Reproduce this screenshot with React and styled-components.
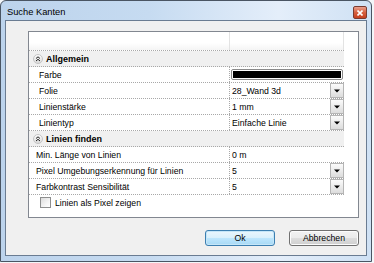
import React from "react";
import styled, { createGlobalStyle } from "styled-components";

const Global = createGlobalStyle`
  html, body { margin: 0; padding: 0; background: #f3f6f9; }
  body { font-family: "Liberation Sans", Arial, sans-serif; }
`;

const Window = styled.div`
  box-sizing: border-box;
  width: 372px;
  height: 262px;
  border: 1px solid #4a5563;
  border-radius: 6px 6px 0 0;
  background: linear-gradient(90deg, #bcd3ec 0%, #c6dbf1 40%, #e4eefa 75%, #cfe1f4 100%);
  padding: 0 4px 5px 4px;
  display: flex;
  flex-direction: column;
`;

const TitleBar = styled.div`
  height: 19px;
  display: flex;
  align-items: center;
  justify-content: space-between;
`;

const Title = styled.span`
  font-size: 9.3px;
  color: #000;
  padding-left: 2px;
  padding-top: 2px;
`;

const CloseBtn = styled.div`
  box-sizing: border-box;
  width: 14px;
  height: 13px;
  margin-top: 4px;
  border: 1px solid #7a3b30;
  border-radius: 2px;
  background: linear-gradient(180deg, #e9a08e 0%, #d7603f 50%, #c6401f 100%);
  display: flex;
  align-items: center;
  justify-content: center;
`;

const Client = styled.div`
  flex: 1;
  box-sizing: border-box;
  border: 1px solid #6a7c92;
  background: #f0f0f0;
  padding: 10px 7px 9px 22px;
  display: flex;
  flex-direction: column;
`;

const Panel = styled.div`
  box-sizing: border-box;
  height: 187px;
  border: 1px solid #828790;
  background: #fff;
`;

const Grid = styled.div`
  width: 315px;
  display: flex;
  flex-direction: column;
`;

const HeaderRow = styled.div`
  box-sizing: border-box;
  height: 19px;
  display: grid;
  grid-template-columns: 201px 114px;
  border-bottom: 1px dotted #a8a8a8;
  background: linear-gradient(180deg, #ffffff 0%, #ffffff 60%, #f4f4f4 100%);
`;

const HeaderCell = styled.div`
  border-right: 1px solid #e3e3e3;
`;

const CategoryRow = styled.div`
  box-sizing: border-box;
  height: 16px;
  display: flex;
  align-items: center;
  gap: 3px;
  padding-left: 4px;
  background: #f0f0f0;
  border-bottom: 1px dotted #a8a8a8;
  font-size: 9px;
  font-weight: bold;
  color: #000;
`;

const Row = styled.div`
  box-sizing: border-box;
  height: 16px;
  display: grid;
  grid-template-columns: 201px 114px;
  border-bottom: 1px dotted #a8a8a8;
  font-size: 8.7px;
  color: #000;
`;

const Label = styled.div`
  box-sizing: border-box;
  display: flex;
  align-items: center;
  padding-left: ${(p) => p.$indent}px;
  border-right: 1px dotted #a8a8a8;
  white-space: nowrap;
`;

const Value = styled.div`
  display: flex;
  align-items: center;
  justify-content: space-between;
  padding-left: 2px;
  white-space: nowrap;
`;

const Swatch = styled.div`
  box-sizing: border-box;
  flex: 1;
  height: 11px;
  margin-right: 1px;
  margin-left: -1px;
  border: 1px solid #8a8a8a;
  border-radius: 2px;
  padding: 1px;
  background: #fff;
  &::after {
    content: "";
    display: block;
    height: 100%;
    background: #000;
  }
`;

const DropBtn = styled.div`
  box-sizing: border-box;
  width: 14px;
  height: 15px;
  border: 1px solid #b5b5b5;
  background: linear-gradient(180deg, #fbfbfb 0%, #ececec 50%, #dcdcdc 100%);
  display: flex;
  align-items: center;
  justify-content: center;
`;

const CheckRow = styled.div`
  height: 15px;
  display: flex;
  align-items: center;
  gap: 4px;
  padding-left: 11px;
  font-size: 8.7px;
  color: #000;
`;

const CheckBox = styled.div`
  box-sizing: border-box;
  width: 11px;
  height: 11px;
  border: 1px solid #8e8f8f;
  background: linear-gradient(135deg, #dcdcdc 0%, #f4f4f4 60%, #ffffff 100%);
`;

const ButtonBar = styled.div`
  display: flex;
  justify-content: flex-end;
  gap: 14px;
  margin-top: 12px;
`;

const Button = styled.div`
  box-sizing: border-box;
  width: 70px;
  height: 16px;
  border-radius: 3px;
  display: flex;
  align-items: center;
  justify-content: center;
  font-size: 8.7px;
  color: #000;
  border: 1px solid ${(p) => (p.$primary ? "#3c7fb1" : "#707070")};
  background: ${(p) =>
    p.$primary
      ? "linear-gradient(180deg, #eaf6fd 0%, #d9f0fc 50%, #bee6fd 51%, #a7d9f5 100%)"
      : "linear-gradient(180deg, #f2f2f2 0%, #ebebeb 50%, #dddddd 51%, #cfcfcf 100%)"};
  box-shadow: inset 0 0 0 1px ${(p) => (p.$primary ? "#c5e6f8" : "#fcfcfc")};
`;

const Chevron = () => (
  <svg width="10" height="10" viewBox="0 0 10 10">
    <defs>
      <linearGradient id="cg" x1="0" y1="0" x2="0" y2="1">
        <stop offset="0" stopColor="#ffffff" />
        <stop offset="1" stopColor="#d8d8d8" />
      </linearGradient>
    </defs>
    <circle cx="5" cy="5" r="4.5" fill="url(#cg)" stroke="#c4c4c4" strokeWidth="1" />
    <path d="M3 4.5 L5 2.8 L7 4.5 M3 7 L5 5.3 L7 7" fill="none" stroke="#222" strokeWidth="1" />
  </svg>
);

const Arrow = () => (
  <svg width="6" height="4" viewBox="0 0 6 4">
    <path d="M0 0.5 H6 L3 3.5 Z" fill="#000" />
  </svg>
);

const CloseX = () => (
  <svg width="6" height="6" viewBox="0 0 6 6">
    <path d="M0.5 0.5 L5.5 5.5 M5.5 0.5 L0.5 5.5" stroke="#fff" strokeWidth="1.6" />
  </svg>
);

const groups = [
  {
    title: "Allgemein",
    indent: 10,
    rows: [
      { label: "Farbe", swatch: true },
      { label: "Folie", value: "28_Wand 3d", drop: true },
      { label: "Linienstärke", value: "1 mm", drop: true },
      { label: "Linientyp", value: "Einfache Linie", drop: true },
    ],
  },
  {
    title: "Linien finden",
    indent: 7,
    rows: [
      { label: "Min. Länge von Linien", value: "0 m" },
      { label: "Pixel Umgebungserkennung für Linien", value: "5", drop: true },
      { label: "Farbkontrast Sensibilität", value: "5", drop: true },
    ],
  },
];

export default function App() {
  return (
    <>
      <Global />
      <Window>
        <TitleBar>
          <Title>Suche Kanten</Title>
          <CloseBtn>
            <CloseX />
          </CloseBtn>
        </TitleBar>
        <Client>
          <Panel>
            <Grid>
              <HeaderRow>
                <HeaderCell />
                <HeaderCell />
              </HeaderRow>
              {groups.map((g) => (
                <React.Fragment key={g.title}>
                  <CategoryRow>
                    <Chevron />
                    <span>{g.title}</span>
                  </CategoryRow>
                  {g.rows.map((r) => (
                    <Row key={r.label}>
                      <Label $indent={g.indent}>{r.label}</Label>
                      <Value>
                        {r.swatch ? <Swatch /> : <span>{r.value}</span>}
                        {r.drop && (
                          <DropBtn>
                            <Arrow />
                          </DropBtn>
                        )}
                      </Value>
                    </Row>
                  ))}
                </React.Fragment>
              ))}
              <CheckRow>
                <CheckBox />
                <span>Linien als Pixel zeigen</span>
              </CheckRow>
            </Grid>
          </Panel>
          <ButtonBar>
            <Button $primary>Ok</Button>
            <Button>Abbrechen</Button>
          </ButtonBar>
        </Client>
      </Window>
    </>
  );
}
